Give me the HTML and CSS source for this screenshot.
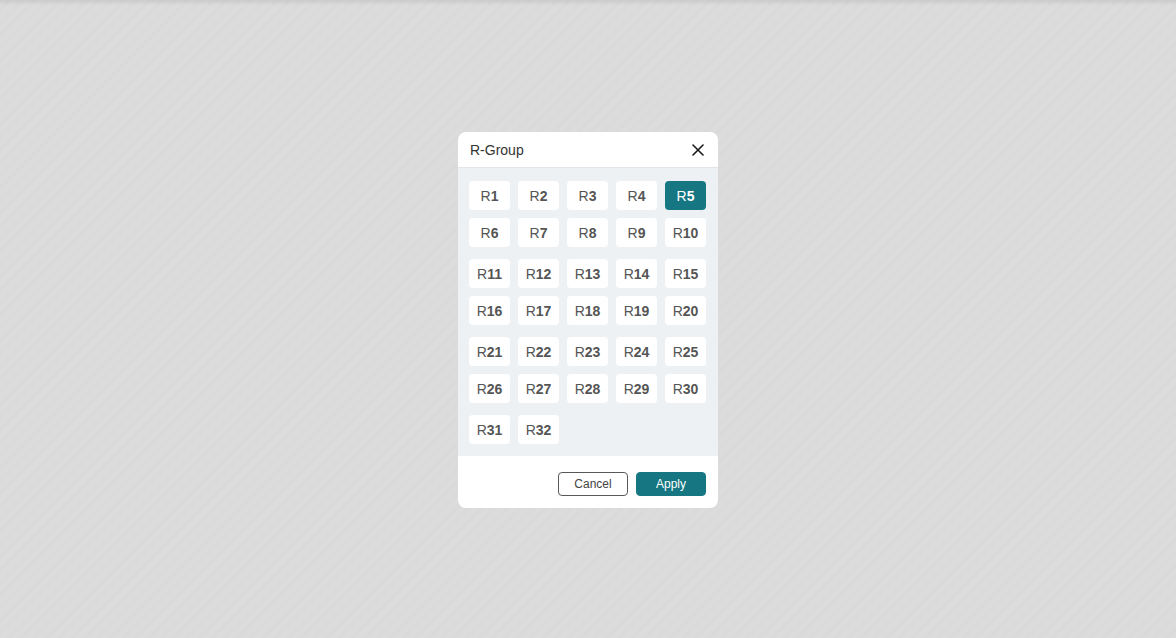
FILE: index.html
```html
<!DOCTYPE html>
<html>
<head>
<meta charset="utf-8">
<link rel="stylesheet" href="styles.css">
</head>
<body>
<div class="backdrop">
  <div class="dialog">
    <div class="header">
      <span class="title">R-Group</span>
      <button class="close" aria-label="Close">
        <svg width="12" height="12" viewBox="0 0 12 12"><path d="M1 1 L11 11 M11 1 L1 11" stroke="#1a1a1a" stroke-width="1.6" stroke-linecap="round"/></svg>
      </button>
    </div>
    <div class="body">
      <div class="group">
        <button class="rbtn">R<b>1</b></button>
        <button class="rbtn">R<b>2</b></button>
        <button class="rbtn">R<b>3</b></button>
        <button class="rbtn">R<b>4</b></button>
        <button class="rbtn selected">R<b>5</b></button>
        <button class="rbtn">R<b>6</b></button>
        <button class="rbtn">R<b>7</b></button>
        <button class="rbtn">R<b>8</b></button>
        <button class="rbtn">R<b>9</b></button>
        <button class="rbtn">R<b>10</b></button>
      </div>
      <div class="group">
        <button class="rbtn">R<b>11</b></button>
        <button class="rbtn">R<b>12</b></button>
        <button class="rbtn">R<b>13</b></button>
        <button class="rbtn">R<b>14</b></button>
        <button class="rbtn">R<b>15</b></button>
        <button class="rbtn">R<b>16</b></button>
        <button class="rbtn">R<b>17</b></button>
        <button class="rbtn">R<b>18</b></button>
        <button class="rbtn">R<b>19</b></button>
        <button class="rbtn">R<b>20</b></button>
      </div>
      <div class="group">
        <button class="rbtn">R<b>21</b></button>
        <button class="rbtn">R<b>22</b></button>
        <button class="rbtn">R<b>23</b></button>
        <button class="rbtn">R<b>24</b></button>
        <button class="rbtn">R<b>25</b></button>
        <button class="rbtn">R<b>26</b></button>
        <button class="rbtn">R<b>27</b></button>
        <button class="rbtn">R<b>28</b></button>
        <button class="rbtn">R<b>29</b></button>
        <button class="rbtn">R<b>30</b></button>
      </div>
      <div class="group">
        <button class="rbtn">R<b>31</b></button>
        <button class="rbtn">R<b>32</b></button>
      </div>
    </div>
    <div class="footer">
      <button class="btn cancel">Cancel</button>
      <button class="btn apply">Apply</button>
    </div>
  </div>
</div>
</body>
</html>
```

FILE: styles.css
```css
* { box-sizing: border-box; }
html, body {
  margin: 0;
  padding: 0;
  width: 100%;
  height: 100%;
  overflow: hidden;
}
body {
  font-family: "Liberation Sans", Arial, sans-serif;
}
.backdrop {
  width: 1176px;
  height: 638px;
  display: flex;
  align-items: center;
  justify-content: center;
  background:
    linear-gradient(to bottom, rgba(0,0,0,0.08) 0, rgba(0,0,0,0.03) 3px, rgba(0,0,0,0) 6px),
    repeating-linear-gradient(135deg, #dcdcdc 0 5px, #dadada 5px 9px);
  padding-top: 2px;
}
.dialog {
  width: 260px;
  height: 376px;
  background: #ffffff;
  border-radius: 8px;
  display: flex;
  flex-direction: column;
  overflow: hidden;
}
.header {
  height: 36px;
  display: flex;
  align-items: center;
  justify-content: space-between;
  padding: 0 14px 0 12px;
  border-bottom: 1px solid #e1e5e9;
}
.title {
  font-size: 14px;
  color: #333333;
}
.close {
  border: 0;
  background: none;
  padding: 0;
  width: 12px;
  height: 12px;
  display: flex;
}
.body {
  background: #eef1f4;
  padding: 13px 12px 12px 11px;
  display: flex;
  flex-direction: column;
  gap: 12px;
  height: 288px;
}
.group {
  display: grid;
  grid-template-columns: repeat(5, 41px);
  column-gap: 8px;
  row-gap: 8px;
}
.rbtn {
  height: 29px;
  border: 0;
  border-radius: 4px;
  background: #ffffff;
  font-family: "Liberation Sans", Arial, sans-serif;
  font-size: 14px;
  color: #555555;
  padding: 0;
  display: flex;
  align-items: center;
  justify-content: center;
}
.rbtn b {
  font-weight: bold;
  color: #555555;
}
.rbtn.selected {
  background: #167782;
  color: #ffffff;
}
.rbtn.selected b { color: #ffffff; }
.footer {
  flex: 1;
  display: flex;
  justify-content: flex-end;
  align-items: center;
  gap: 8px;
  padding: 4px 12px 0 0;
}
.btn {
  width: 70px;
  height: 24px;
  border-radius: 4px;
  font-family: "Liberation Sans", Arial, sans-serif;
  font-size: 12px;
  padding: 0;
}
.cancel {
  background: #ffffff;
  border: 1px solid #585858;
  color: #444444;
}
.apply {
  background: #167782;
  border: 1px solid #167782;
  color: #ffffff;
}
```
